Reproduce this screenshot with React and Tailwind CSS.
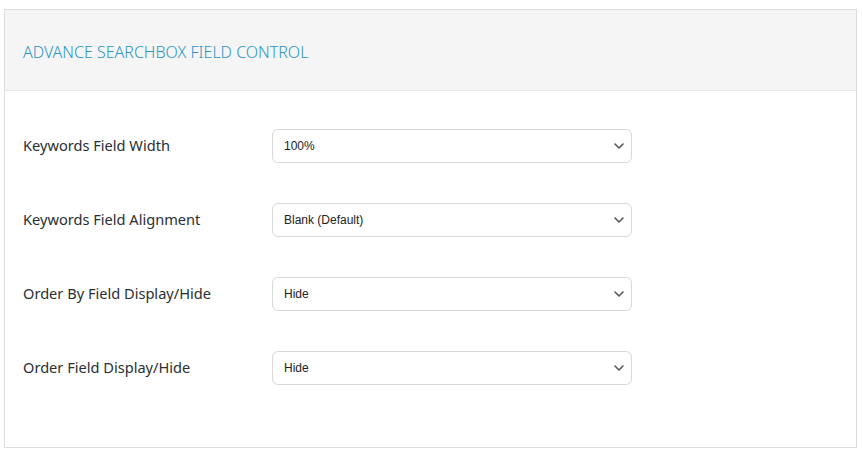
import React from 'react';

const rows = [
  { label: 'Keywords Field Width', value: '100%' },
  { label: 'Keywords Field Alignment', value: 'Blank (Default)' },
  { label: 'Order By Field Display/Hide', value: 'Hide' },
  { label: 'Order Field Display/Hide', value: 'Hide' },
];

const Chevron = () => (
  <svg width="10" height="6" viewBox="0 0 10 6" fill="none" className="text-[#555]">
    <path d="M1 1l4 4 4-4" stroke="currentColor" strokeWidth="1.6" strokeLinecap="round" strokeLinejoin="round" />
  </svg>
);

export default function App() {
  return (
    <div className="w-[862px] h-[454px] bg-white pt-[9px] pl-[4px]" style={{ fontFamily: '"Noto Sans", "Open Sans", sans-serif' }}>
      <div className="w-[853px] h-[439px] border border-[#dcdcdc] flex flex-col">
        {/* header */}
        <div className="h-[81px] bg-[#f5f5f5] border-b border-[#e8e8e8] flex items-center px-[18px] pt-[4px]">
          <h2 className="text-[16px] font-light text-[#2b95c3]">ADVANCE SEARCHBOX FIELD CONTROL</h2>
        </div>

        {/* fields */}
        <div className="flex flex-col gap-[40px] pt-[38px] pl-[18px]">
          {rows.map((r) => (
            <div key={r.label} className="flex items-center h-[34px]">
              <label className="w-[249px] text-[14.6px] text-[#2a2f33]">{r.label}</label>
              <div className="w-[360px] h-[34px] border border-[#d9d9d9] rounded-[6px] flex items-center justify-between pl-[11px] pr-[7px]">
                <span className="text-[12px] text-[#222]" style={{ fontFamily: '"Liberation Sans", Arial, sans-serif' }}>{r.value}</span>
                <Chevron />
              </div>
            </div>
          ))}
        </div>
      </div>
    </div>
  );
}
